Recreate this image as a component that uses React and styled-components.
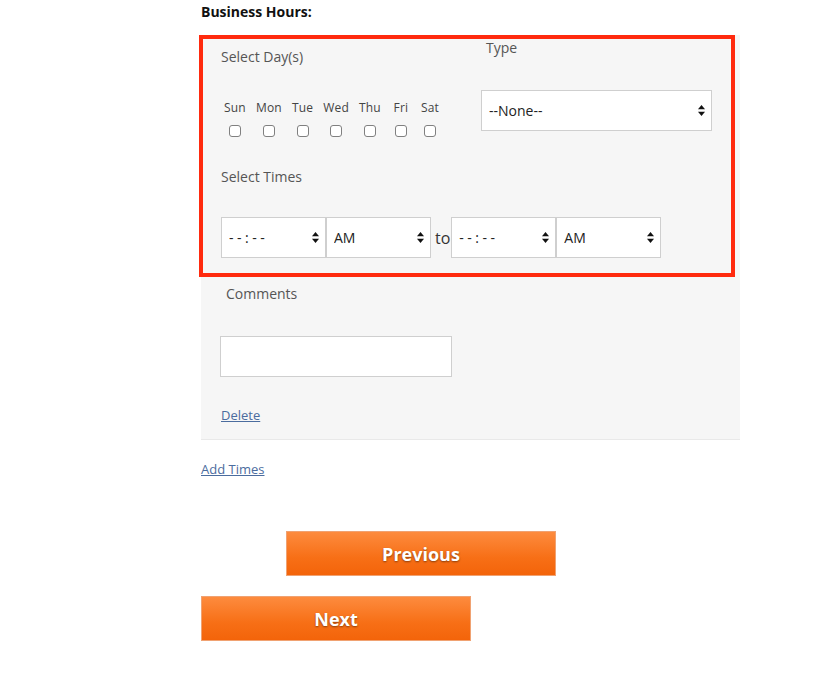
import React from 'react';
import styled, { createGlobalStyle } from 'styled-components';

const GlobalStyle = createGlobalStyle`
    html, body {
        margin: 0;
        padding: 0;
        background: #ffffff;
        font-family: "Open Sans", "Noto Sans", Arial, sans-serif;
    }
`;

const Page = styled.div`
    width: 539px;
    margin-left: 201px;
    padding-top: 2px;
`;

const Heading = styled.h3`
    margin: 0 0 13px 0;
    font-size: 14px;
    line-height: 20px;
    font-weight: 700;
    color: #111;
`;

const Panel = styled.div`
    background-color: #f6f6f6;
    border-bottom: 1px solid #e9e9e9;
    padding-bottom: 14px;
`;

const Highlight = styled.div`
    margin-left: -2px;
    margin-right: 5px;
    border: 4px solid #ff2a0e;
    padding: 0 0 15px 18px;
`;

const TopRow = styled.div`
    display: flex;
`;

const DaysCol = styled.div`
    width: 260px;
`;

const TypeCol = styled.div`
    width: 231px;
`;

const Label = styled.div`
    font-size: 14px;
    line-height: 20px;
    color: #555;
    margin-top: ${(props) => props.top || 0}px;
    padding-left: ${(props) => props.indent || 0}px;
`;

const TypeLabel = styled(Label)`
    line-height: 18px;
`;

const DayRow = styled.div`
    display: flex;
    gap: 10px;
    margin-top: 33px;
    padding-left: 3px;
`;

const DayCell = styled.label`
    display: flex;
    flex-direction: column;
    align-items: center;
    min-width: ${(props) => props.min || 0}px;
`;

const DayName = styled.span`
    font-size: 12px;
    line-height: 16px;
    color: #444;
    letter-spacing: 0.2px;
`;

const Check = styled.input`
    appearance: none;
    width: 12px;
    height: 12px;
    margin: 9px 0 0 0;
    border: 1px solid #808080;
    border-radius: 3px;
    background: #fff;
    box-sizing: border-box;
`;

const SelectBox = styled.div`
    position: relative;
    width: ${(props) => props.w}px;
    height: 41px;
    margin-top: ${(props) => props.top || 0}px;
    flex-shrink: 0;
`;

const NativeSelect = styled.select`
    appearance: none;
    width: 100%;
    height: 100%;
    box-sizing: border-box;
    border: 1px solid #cfcfcf;
    border-radius: 0;
    background: #fff;
    font-family: "Open Sans", "Noto Sans", Arial, sans-serif;
    font-size: 14px;
    color: #222;
    padding: 0 20px 0 7px;
    letter-spacing: ${(props) => props.spaced ? '3.5px' : '0'};
    outline: none;
`;

const Arrows = styled.svg`
    position: absolute;
    right: 7px;
    top: 15px;
    pointer-events: none;
`;

const TimeRow = styled.div`
    display: flex;
    align-items: center;
    margin-top: 30px;
`;

const Joiner = styled.span`
    font-size: 16px;
    color: #333;
    padding: 0 1px 0 4px;
`;

const Lower = styled.div`
    padding-left: 19px;
`;

const CommentInput = styled.input`
    display: block;
    width: 232px;
    height: 41px;
    box-sizing: border-box;
    margin-top: 32px;
    border: 1px solid #cfcfcf;
    background: #fff;
`;

const LinkText = styled.a`
    display: inline-block;
    font-size: 13px;
    line-height: 18px;
    color: #4b6c9e;
    text-decoration: underline;
    margin-top: ${(props) => props.top || 0}px;
    padding-left: ${(props) => props.indent || 0}px;
    cursor: pointer;
`;

const Buttons = styled.div`
    display: flex;
    flex-direction: column;
    gap: 20px;
    margin-top: 52px;
`;

const OrangeButton = styled.button`
    width: 270px;
    height: 45px;
    margin-left: ${(props) => props.offset || 0}px;
    border: 1px solid #f0a272;
    background: linear-gradient(to bottom, #fd8b3e 0%, #f76f16 60%, #f3640a 100%);
    color: #fff;
    font-family: "Open Sans", "Noto Sans", Arial, sans-serif;
    font-size: 18px;
    font-weight: 700;
    text-shadow: 0 1px 2px rgba(0, 0, 0, 0.45);
    cursor: pointer;
`;

function UpDown() {
    return (
        <Arrows width="7" height="11" viewBox="0 0 7 11">
            <path d="M3.5 0 L7 4.2 L0 4.2 Z" fill="#111" />
            <path d="M3.5 11 L7 6.8 L0 6.8 Z" fill="#111" />
        </Arrows>
    );
}

function Dropdown({ w, top, spaced, options }) {
    return (
        <SelectBox w={w} top={top}>
            <NativeSelect spaced={spaced}>
                {options.map((o) => <option key={o}>{o}</option>)}
            </NativeSelect>
            <UpDown />
        </SelectBox>
    );
}

const days = [
    { name: 'Sun' },
    { name: 'Mon' },
    { name: 'Tue' },
    { name: 'Wed' },
    { name: 'Thu' },
    { name: 'Fri', min: 20 },
    { name: 'Sat' },
];

export default function App() {
    return (
        <Page>
            <GlobalStyle />
            <Heading>Business Hours:</Heading>
            <Panel>
                <Highlight>
                    <TopRow>
                        <DaysCol>
                            <Label top={8}>Select Day(s)</Label>
                            <DayRow>
                                {days.map((d) => (
                                    <DayCell key={d.name} min={d.min}>
                                        <DayName>{d.name}</DayName>
                                        <Check type="checkbox" />
                                    </DayCell>
                                ))}
                            </DayRow>
                        </DaysCol>
                        <TypeCol>
                            <TypeLabel indent={5}>Type</TypeLabel>
                            <Dropdown w={231} top={33} options={['--None--']} />
                        </TypeCol>
                    </TopRow>
                    <Label top={30}>Select Times</Label>
                    <TimeRow>
                        <Dropdown w={105} spaced options={['--:--']} />
                        <Dropdown w={105} options={['AM', 'PM']} />
                        <Joiner>to</Joiner>
                        <Dropdown w={105} spaced options={['--:--']} />
                        <Dropdown w={105} options={['AM', 'PM']} />
                    </TimeRow>
                </Highlight>
                <Lower>
                    <Label top={7} indent={6}>Comments</Label>
                    <CommentInput type="text" />
                    <LinkText top={29} indent={1}>Delete</LinkText>
                </Lower>
            </Panel>
            <LinkText top={20}>Add Times</LinkText>
            <Buttons>
                <OrangeButton offset={85}>Previous</OrangeButton>
                <OrangeButton>Next</OrangeButton>
            </Buttons>
        </Page>
    );
}
